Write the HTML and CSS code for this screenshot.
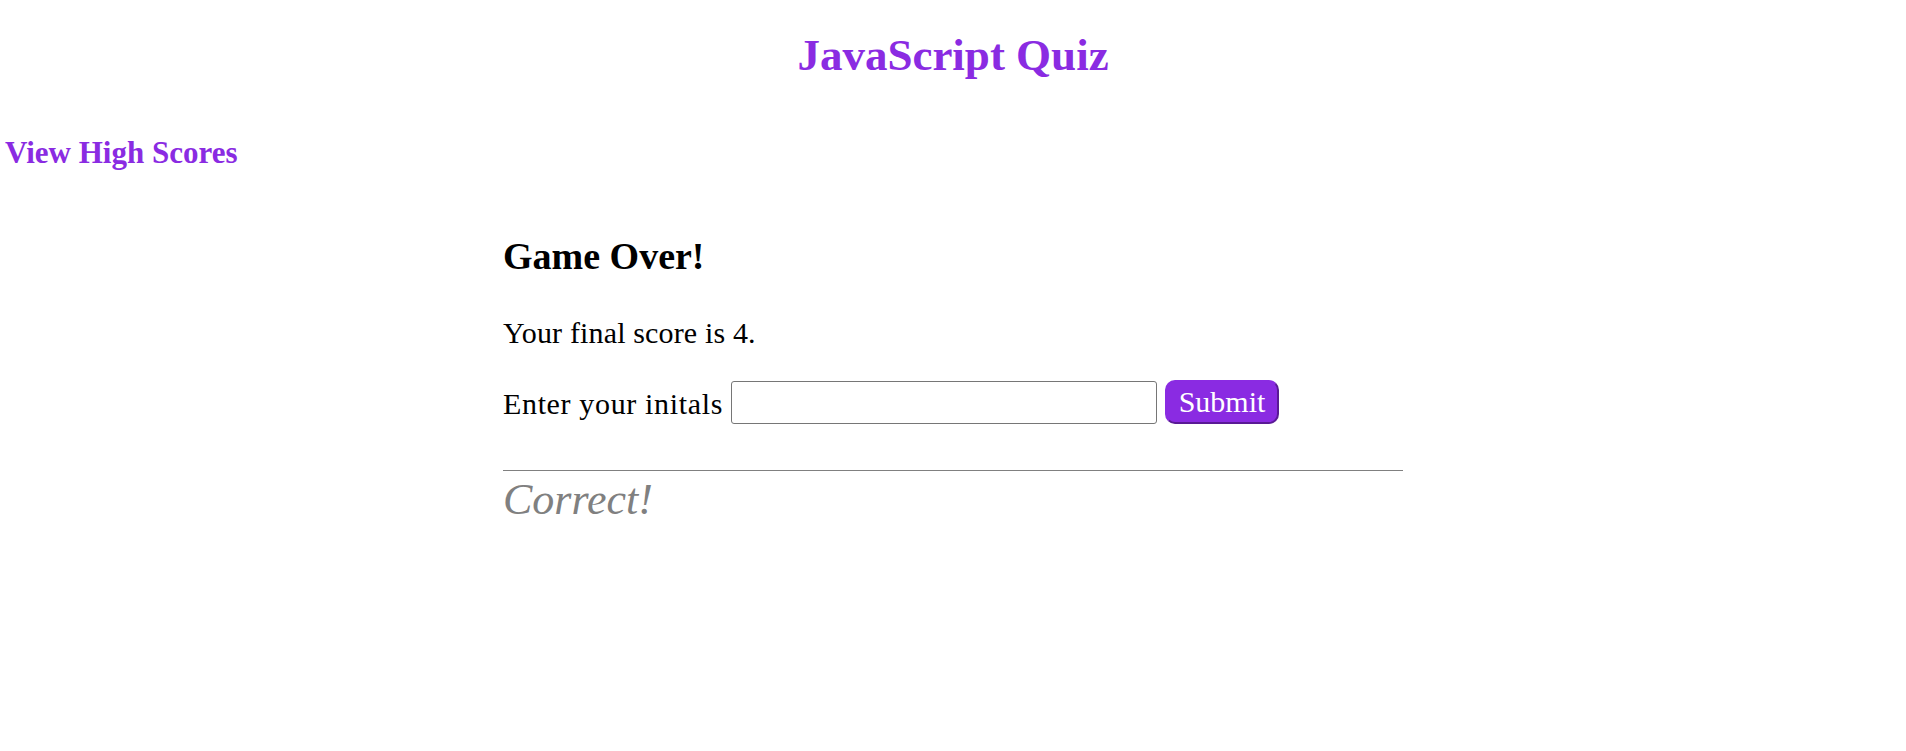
FILE: index.html
```html
<!DOCTYPE html>
<html lang="en">
<head>
<meta charset="utf-8">
<title>JavaScript Quiz</title>
<link rel="stylesheet" href="styles.css">
</head>
<body>
  <header class="header">
    <h1 class="title">JavaScript Quiz</h1>
    <a class="scores-link" href="#">View High Scores</a>
  </header>
  <main class="quiz">
    <h2 class="quiz-heading">Game Over!</h2>
    <p class="final-score">Your final score is 4.</p>
    <form class="initials-form">
      <label class="initials-label" for="initials">Enter your initals</label>
      <input class="initials-input" id="initials" type="text">
      <button class="submit-btn" type="button">Submit</button>
    </form>
    <hr class="divider">
    <p class="feedback">Correct!</p>
  </main>
</body>
</html>
```
FILE: styles.css
```css
html, body {
  margin: 0;
  padding: 0;
  background: #ffffff;
}

body {
  font-family: "Liberation Serif", "Times New Roman", serif;
  color: #000000;
}

.header {
  display: flex;
  flex-direction: column;
}

.title {
  margin: 27px 0 0;
  font-size: 45px;
  line-height: 56px;
  font-weight: bold;
  text-align: center;
  color: #8a2be2;
}

.scores-link {
  margin-top: 50px;
  padding-left: 5px;
  font-size: 31px;
  line-height: 40px;
  font-weight: bold;
  color: #8a2be2;
  text-decoration: none;
  align-self: flex-start;
}

.quiz {
  width: 900px;
  margin: 0 auto;
}

.quiz-heading {
  margin: 59px 0 0;
  font-size: 38px;
  line-height: 48px;
  font-weight: bold;
}

.final-score {
  margin: 33px 0 0;
  font-size: 30px;
  line-height: 40px;
  letter-spacing: 0.15px;
}

.initials-form {
  margin: 27px 0 0;
  display: flex;
  align-items: flex-end;
  gap: 8px;
  height: 44px;
}

.initials-label {
  font-size: 30px;
  line-height: 40px;
  letter-spacing: 0.65px;
}

.initials-input {
  box-sizing: border-box;
  width: 426px;
  height: 43px;
  margin: 0;
  border: 1px solid #767676;
  border-radius: 3px;
  font-family: inherit;
  font-size: 24px;
  padding: 0 6px;
}

.submit-btn {
  box-sizing: border-box;
  width: 114px;
  height: 44px;
  margin: 0;
  padding: 0 10px;
  border: 2px solid;
  border-color: #8a2be2 #5a1a95 #5a1a95 #8a2be2;
  border-radius: 10px;
  background: #8a2be2;
  color: #ffffff;
  font-family: inherit;
  font-size: 30px;
  line-height: 38px;
}

.divider {
  margin: 46px 0 0;
  height: 0;
  border: 0;
  border-top: 1px solid #808080;
}

.feedback {
  margin: 3px 0 0;
  font-size: 44px;
  line-height: 52px;
  font-style: italic;
  color: #808080;
}
```
